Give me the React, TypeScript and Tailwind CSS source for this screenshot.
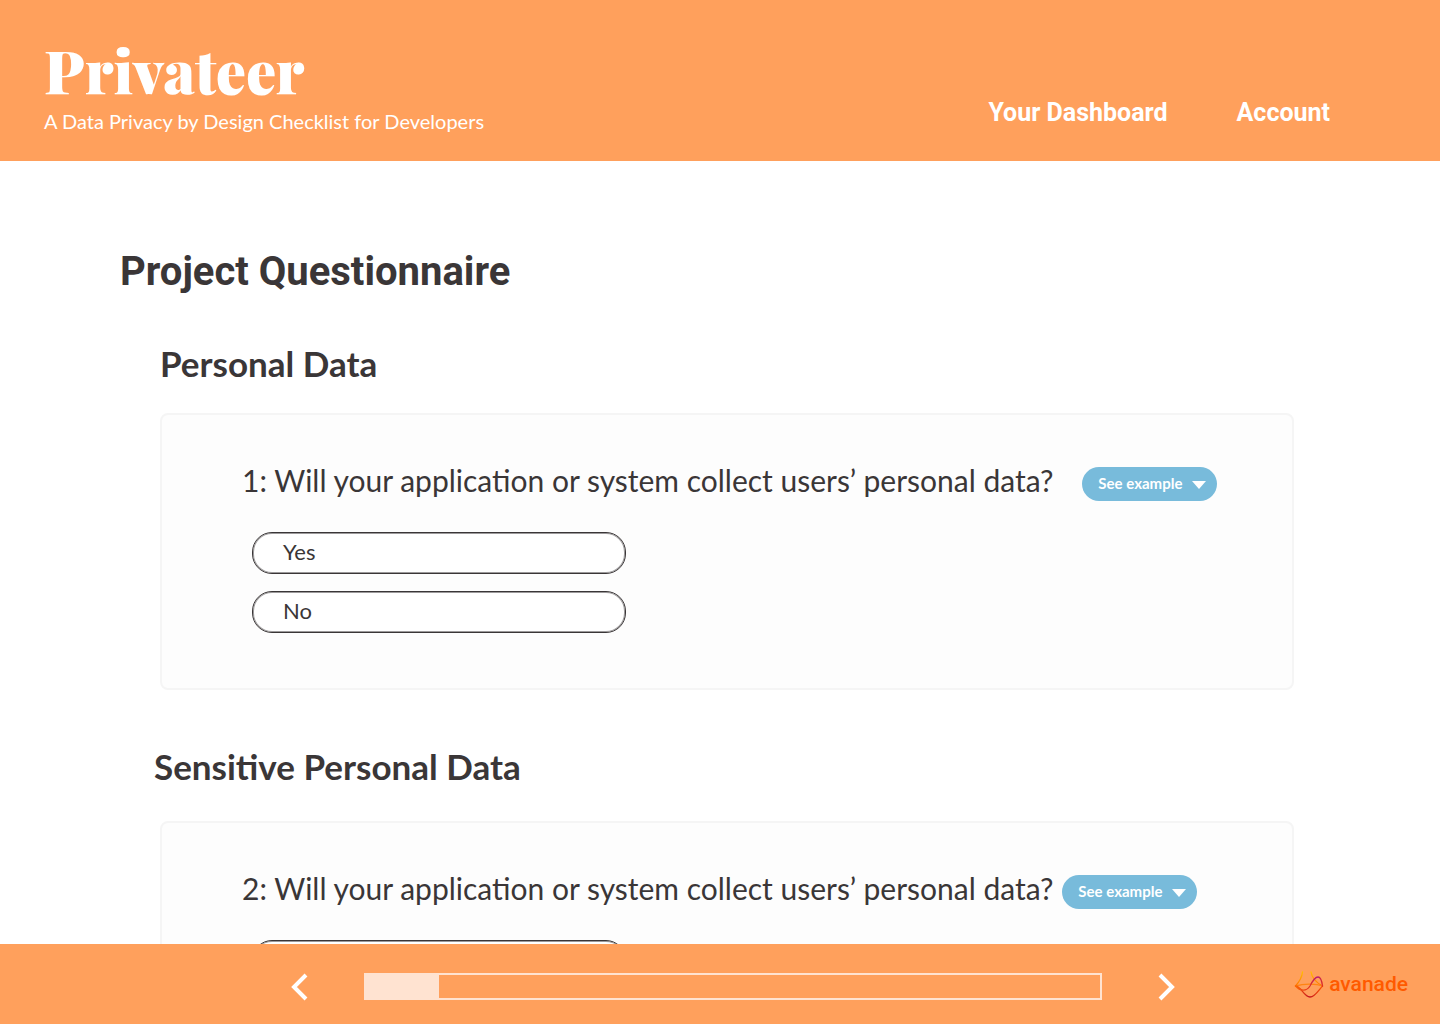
import { useState } from "react";

type Question = {
  id: number;
  section: string;
  text: string;
  sectionClass: string;
  headingClass: string;
  gapClass: string;
};

const questions: Question[] = [
  {
    id: 1,
    section: "Personal Data",
    text: "Will your application or system collect users’ personal data?",
    sectionClass: "gap-[25px]",
    headingClass: "pl-10",
    gapClass: "gap-[29px]",
  },
  {
    id: 2,
    section: "Sensitive Personal Data",
    text: "Will your application or system collect users’ personal data?",
    sectionClass: "gap-[30px]",
    headingClass: "pl-[34px]",
    gapClass: "gap-[9px]",
  },
];

function QuestionSection({ question }: { question: Question }) {
  const [answer, setAnswer] = useState("");
  const titleId = `question-${question.id}`;
  return (
    <section className={`flex flex-col ${question.sectionClass}`}>
      <h2 className={`text-[35px] leading-[50px] font-bold ${question.headingClass}`}>{question.section}</h2>
      <div className="ml-10 rounded-lg border-2 border-[#f5f5f5] bg-[#fdfdfd] px-20 pt-12 pb-[55px]">
        <div className={`flex items-center ${question.gapClass}`}>
          <h3 id={titleId} className="pb-1 text-3xl leading-[34px] whitespace-nowrap">
            {question.id}: {question.text}
          </h3>
          <button
            type="button"
            className="mt-1 flex h-[34px] shrink-0 items-center gap-2.5 rounded-full bg-[#78bbdb] pr-[11px] pl-4 text-[15px] font-bold text-white"
          >
            <span className="pb-0.5">See example</span>
            <svg className="mt-0.5" width="14" height="8" viewBox="0 0 14 8" fill="currentColor" aria-hidden="true">
              <path d="M0 0h14L7 8z" />
            </svg>
          </button>
        </div>
        <div role="radiogroup" aria-labelledby={titleId} className="mt-[31px] ml-[10px] flex w-[374px] flex-col gap-[17px]">
          {["Yes", "No"].map((option) => (
            <label
              key={option}
              className="flex h-[42px] cursor-pointer items-center rounded-[20px] border border-[#3a3637] bg-white px-[30px] pb-1 text-[22px] inset-ring-1 inset-ring-[#3a3637]/50 has-checked:bg-[#ffe3d1]"
            >
              <input
                type="radio"
                name={titleId}
                value={option}
                checked={answer === option}
                onChange={() => setAnswer(option)}
                className="sr-only"
              />
              {option}
            </label>
          ))}
        </div>
      </div>
    </section>
  );
}

function AvanadeLogo() {
  return (
    <a href="#avanade" className="flex items-center gap-[5px] text-[#ff5a00]">
      <svg width="30" height="28" viewBox="5 4 30 28" fill="none" strokeWidth="1.3" strokeLinecap="round" aria-hidden="true">
        <defs>
          <linearGradient id="ribbon" x1="6" y1="0" x2="34" y2="0" gradientUnits="userSpaceOnUse">
            <stop offset="0" stopColor="#ff6a00" />
            <stop offset="0.5" stopColor="#e0301e" />
            <stop offset="0.8" stopColor="#b5177b" />
            <stop offset="1" stopColor="#e0301e" />
          </linearGradient>
          <linearGradient id="base" x1="6" y1="0" x2="34" y2="0" gradientUnits="userSpaceOnUse">
            <stop offset="0" stopColor="#ff6a00" />
            <stop offset="0.5" stopColor="#c4121f" />
            <stop offset="1" stopColor="#ff5a00" />
          </linearGradient>
          <linearGradient id="strand" x1="0" y1="5" x2="0" y2="20" gradientUnits="userSpaceOnUse">
            <stop offset="0" stopColor="#ffc400" />
            <stop offset="1" stopColor="#ff7300" />
          </linearGradient>
        </defs>
        <path d="M13.5 6C13 11 11 15 6.500 20" stroke="url(#strand)" />
        <path d="M22 6c1 6 6 11 11.500 14" stroke="url(#strand)" />
        <path d="M6.500 20c7.500-2 19.500-3 27 0" stroke="#ff8412" />
        <path d="M6.500 20C12 20 15 31 21 31c5 0 8-6 12.500-11" stroke="url(#base)" />
        <path d="M6.500 20C11 25 17 26 21 20c3-6 5-9 8-9s4 5 4.500 9" stroke="url(#ribbon)" />
      </svg>
      <span className="font-[Roboto,sans-serif] text-[21px] leading-7 font-medium">avanade</span>
    </a>
  );
}

export default function App() {
  return (
    <div className="flex h-screen flex-col bg-white font-[Lato,sans-serif] text-[#3a3637]">
      <header className="flex shrink-0 items-end justify-between bg-[#ffa05c] pt-[29px] pr-[110px] pb-7 pl-11 text-white">
        <div>
          <p className="font-['Playfair_Display','Liberation_Serif',serif] text-6xl leading-20 font-black">Privateer</p>
          <p className="text-xl leading-6">A Data Privacy by Design Checklist for Developers</p>
        </div>
        <nav className="flex gap-[69px] pb-1 font-[Roboto,sans-serif] text-[25px] leading-8 font-bold">
          <a href="#dashboard">Your Dashboard</a>
          <a href="#account">Account</a>
        </nav>
      </header>

      <main className="min-h-0 flex-1 overflow-y-auto pt-20 pr-[146px] pb-10 pl-[120px] [scrollbar-width:none]">
        <h1 className="font-[Roboto,sans-serif] text-[40px] leading-[62px] font-bold">Project Questionnaire</h1>
        <div className="mt-[35px] flex flex-col gap-[51px]">
          {questions.map((question) => (
            <QuestionSection key={question.id} question={question} />
          ))}
        </div>
      </main>

      <footer className="flex h-20 shrink-0 items-center bg-[#ffa05c] pr-8 pl-[290px] text-white">
        <button type="button" aria-label="Previous" className="mt-1.5">
          <svg width="18" height="28" viewBox="0 0 18 28" fill="none" stroke="currentColor" strokeWidth="4" aria-hidden="true">
            <path d="M16 2 4 14l12 12" />
          </svg>
        </button>
        <div
          role="progressbar"
          aria-label="Questionnaire progress"
          aria-valuenow={10}
          aria-valuemin={0}
          aria-valuemax={100}
          className="mt-1 ml-14 h-[27px] flex-1 border-2 border-[#ffe3d1]"
        >
          <div className="h-full bg-[#ffe3d1]" style={{ width: "10%" }} />
        </div>
        <button type="button" aria-label="Next" className="mt-1.5 ml-14">
          <svg width="18" height="28" viewBox="0 0 18 28" fill="none" stroke="currentColor" strokeWidth="4" aria-hidden="true">
            <path d="m2 2 12 12L2 26" />
          </svg>
        </button>
        <div className="ml-[118px]">
          <AvanadeLogo />
        </div>
      </footer>
    </div>
  );
}
